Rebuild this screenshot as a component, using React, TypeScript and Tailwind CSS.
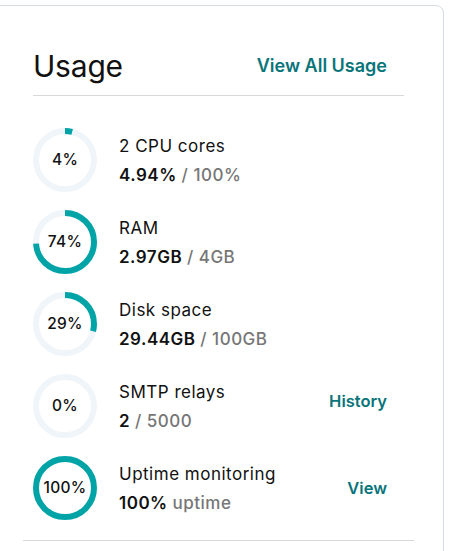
import React from "react";

type Row = {
  id: string;
  label: string;
  pct: number;
  ring: string;
  used: string;
  total: string;
  link?: string;
};

const rows: Row[] = [
  { id: "cpu", label: "2 CPU cores", pct: 4, ring: "4%", used: "4.94%", total: "/ 100%" },
  { id: "ram", label: "RAM", pct: 74, ring: "74%", used: "2.97GB", total: "/ 4GB" },
  { id: "disk", label: "Disk space", pct: 29, ring: "29%", used: "29.44GB", total: "/ 100GB" },
  { id: "smtp", label: "SMTP relays", pct: 0, ring: "0%", used: "2", total: "/ 5000", link: "History" },
  { id: "uptime", label: "Uptime monitoring", pct: 100, ring: "100%", used: "100%", total: "uptime", link: "View" },
];

/** Donut ring with a percentage in the middle */
function Ring({ pct, text }: { pct: number; text: string }) {
  const r = 29;
  const c = 2 * Math.PI * r;
  return (
    <div className="relative w-16 h-16 shrink-0">
      <svg width="64" height="64" viewBox="0 0 64 64" className="-rotate-90">
        <circle cx="32" cy="32" r={r} fill="none" stroke="#f0f5fa" strokeWidth="6" />
        {pct > 0 && (
          <circle
            cx="32"
            cy="32"
            r={r}
            fill="none"
            stroke="#00a4a6"
            strokeWidth="6"
            strokeDasharray={`${(c * pct) / 100} ${c}`}
          />
        )}
      </svg>
      <span className="absolute inset-0 flex items-center justify-center text-[15.5px] font-medium tracking-[0.3px] text-[#111]">
        {text}
      </span>
    </div>
  );
}

export default function App() {
  return (
    <div className="w-[453px] h-[551px] overflow-hidden bg-white pt-[5px]" style={{ fontFamily: "Inter, 'Noto Sans', sans-serif" }}>
      <div className="-ml-2 w-[452px] h-[600px] rounded-lg border border-[#d6dce1] bg-white">
        <div className="ml-[40px] w-[371px]">
          <div className="flex items-end justify-between pt-[40px] pb-[9px] border-b border-[#d6d9dc]">
            <h1 className="text-[30px] leading-[40px] text-[#111] tracking-[-0.2px]">Usage</h1>
            <a className="mr-[17px] mb-[8px] text-[18px] leading-[24px] font-semibold text-[#09757a]">View All Usage</a>
          </div>

          <div className="flex flex-col gap-[18px] pt-[32px] pb-[20px] border-b border-[#d6d9dc] -mx-[10px] px-[10px]">
            {rows.map((row) => (
              <div key={row.id} className="flex items-center">
                <Ring pct={row.pct} text={row.ring} />
                <div className="ml-[22px] flex flex-col gap-[5px] flex-1 tracking-[0.5px]">
                  <span className="text-[17px] leading-[24px] text-[#111]">{row.label}</span>
                  <span className="text-[17px] leading-[24px] font-semibold text-[#111]">
                    {row.used} <span className="font-medium text-[#767676]">{row.total}</span>
                  </span>
                </div>
                {row.link && (
                  <a
                    className={`mr-[17px] text-[16.5px] leading-[24px] font-semibold text-[#09757a] ${
                      row.id === "smtp" ? "mb-[10px]" : ""
                    }`}
                  >
                    {row.link}
                  </a>
                )}
              </div>
            ))}
          </div>
        </div>
      </div>
    </div>
  );
}
